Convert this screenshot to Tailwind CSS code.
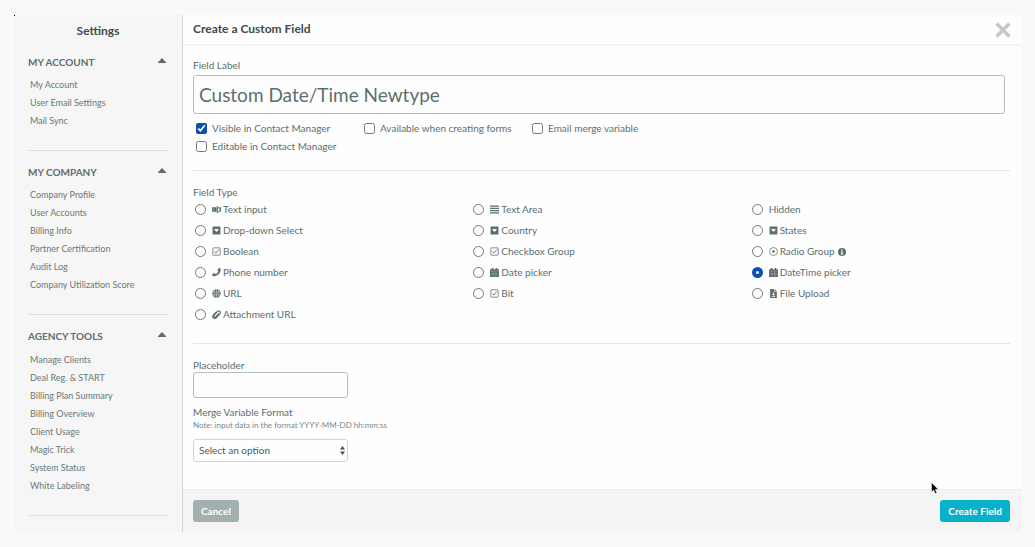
<!DOCTYPE html>
<html lang="en">
<head>
  <meta charset="UTF-8">
  <meta name="viewport" content="width=device-width, initial-scale=1.0">
  <title>Create a Custom Field</title>
  <script src="https://cdn.jsdelivr.net/npm/@tailwindcss/browser@4"></script>
</head>
<body class="bg-[#f9f9f9] font-['Lato',sans-serif] text-[10px] text-[#5c6e6d]">

  <!-- Icons -->
  <svg class="hidden" fill="currentColor">
    <symbol id="i-text" viewBox="0 0 16 16"><path d="M1 4h7v8H1a1 1 0 0 1-1-1V5a1 1 0 0 1 1-1zm1.500 2.500v3h1v-3zM8 2h3v1.200h-.6v9.600h.6V14H8v-1.200h.6V3.200H8zM11 4h4a1 1 0 0 1 1 1v6a1 1 0 0 1-1 1h-4v-2h2.500V6H11z"/></symbol>
    <symbol id="i-caret" viewBox="0 0 16 16"><path fill-rule="evenodd" d="M2 1h12a1 1 0 0 1 1 1v12a1 1 0 0 1-1 1H2a1 1 0 0 1-1-1V2a1 1 0 0 1 1-1zm2.500 4.500v1.500l3.500 3.500 3.500-3.500V5.500z"/></symbol>
    <symbol id="i-check" viewBox="0 0 16 16"><rect x="1.500" y="1.500" width="13" height="13" rx="1" fill="none" stroke="currentColor" stroke-width="1.400"/><path d="M4.500 8l2.500 2.800L12 4.500" fill="none" stroke="currentColor" stroke-width="1.600"/></symbol>
    <symbol id="i-phone" viewBox="0 0 16 16"><path d="M12 0l3.500 1C16 9 10 15.500 1.500 14.500L0 11l4.500-2 1.800 2C9 9.500 10.500 8 11.300 6L9.500 4.500z"/></symbol>
    <symbol id="i-globe" viewBox="0 0 16 16"><circle cx="8" cy="8" r="7.500"/><path d="M1 5.500h14M1 10.500h14M8 .5v15M5 1.500c-1.500 4-1.500 9 0 13M11 1.500c1.500 4 1.500 9 0 13" fill="none" stroke="#fefefe" stroke-width=".7"/></symbol>
    <symbol id="i-clip" viewBox="0 0 16 16"><path d="M12.500 6L7 12c-2 2-5-.5-3-3l6-6.500c2.500-2.500 6.500 1 4 4L8 13.500c-4 4-9-1-5.500-5L8 3" fill="none" stroke="currentColor" stroke-width="2"/></symbol>
    <symbol id="i-lines" viewBox="0 0 16 16"><path d="M0 1h16v2H0zM0 5h16v2H0zM0 9h16v2H0zM0 13h16v2H0z"/></symbol>
    <symbol id="i-cal" viewBox="0 0 16 16"><path d="M3 0h3v2h4V0h3v2h2a1 1 0 0 1 1 1v12a1 1 0 0 1-1 1H1a1 1 0 0 1-1-1V3a1 1 0 0 1 1-1h2z"/><path d="M5.500 6v10M10.500 6v10M0 10.800h16M0 5.500h16" stroke="#fefefe" stroke-width=".4"/></symbol>
    <symbol id="i-radio" viewBox="0 0 16 16"><circle cx="8" cy="8" r="7" fill="none" stroke="currentColor" stroke-width="1.300"/><circle cx="8" cy="8" r="2.300"/></symbol>
    <symbol id="i-file" viewBox="0 0 16 16"><path fill-rule="evenodd" d="M3 0h6v5h5v11H3a1 1 0 0 1-1-1V1a1 1 0 0 1 1-1zm7 0l4 4h-4zM7 6v3H5l3 3 3-3H9V6zM5 13v1h6v-1z"/></symbol>
    <symbol id="i-info" viewBox="0 0 16 16"><path fill-rule="evenodd" d="M8 0a8 8 0 1 1 0 16A8 8 0 0 1 8 0zM6.700 2.500v2.500h2.600V2.500zM5.700 6.500V8h1v3.500h-1V13h4.600v-1.500h-1v-5z"/></symbol>
    <symbol id="i-up" viewBox="0 0 8 5"><path d="M4 0l4 4.300V5H0v-.7z"/></symbol>
  </svg>

  <div class="flex min-h-screen px-3.5 py-[15px]">
    <div class="relative flex flex-1 overflow-hidden rounded-br">
      <span class="absolute top-0 left-0 size-px bg-black"></span>

      <!-- Sidebar -->
      <aside class="w-[169px] shrink-0 border-r border-[#d3d6d9] bg-[#f6f6f6] px-3.5 text-[9px] leading-[18px]">
        <h2 class="pt-[7px] text-center text-[12px] font-bold text-[#3d4b4b]">Settings</h2>

        <section class="border-b border-[#dfe2e3] pt-[13px] pb-5">
          <button class="flex w-full items-center justify-between pr-0.5 text-[10px] font-bold">MY ACCOUNT <svg class="mb-1 h-[5px] w-2" fill="currentColor"><use href="#i-up"/></svg></button>
          <ul class="pt-[5px] pl-0.5 text-[#6a7978]">
            <li><a href="#">My Account</a></li>
            <li><a href="#">User Email Settings</a></li>
            <li><a href="#">Mail Sync</a></li>
          </ul>
        </section>

        <section class="border-b border-[#dfe2e3] pt-3 pb-5">
          <button class="flex w-full items-center justify-between pr-0.5 text-[10px] font-bold">MY COMPANY <svg class="mb-1 h-[5px] w-2" fill="currentColor"><use href="#i-up"/></svg></button>
          <ul class="pt-[5px] pl-0.5 text-[#6a7978]">
            <li><a href="#">Company Profile</a></li>
            <li><a href="#">User Accounts</a></li>
            <li><a href="#">Billing Info</a></li>
            <li><a href="#">Partner Certification</a></li>
            <li><a href="#">Audit Log</a></li>
            <li><a href="#">Company Utilization Score</a></li>
          </ul>
        </section>

        <section class="border-b border-[#dfe2e3] pt-3 pb-5">
          <button class="flex w-full items-center justify-between pr-0.5 text-[10px] font-bold">AGENCY TOOLS <svg class="mb-1 h-[5px] w-2" fill="currentColor"><use href="#i-up"/></svg></button>
          <ul class="pt-1.5 pl-0.5 text-[#6a7978]">
            <li><a href="#">Manage Clients</a></li>
            <li><a href="#">Deal Reg. &amp; START</a></li>
            <li><a href="#">Billing Plan Summary</a></li>
            <li><a href="#">Billing Overview</a></li>
            <li><a href="#">Client Usage</a></li>
            <li><a href="#">Magic Trick</a></li>
            <li><a href="#">System Status</a></li>
            <li><a href="#">White Labeling</a></li>
          </ul>
        </section>
      </aside>

      <!-- Custom field form -->
      <form class="flex flex-1 flex-col bg-[#fefefe]">
        <header class="flex h-[31px] items-center justify-between border-b-2 border-[#f4f4f6] pr-2.5 pl-2.5">
          <h1 class="pb-0.5 text-[12px] font-bold text-[#3d4b4b]">Create a Custom Field</h1>
          <button type="button" aria-label="Close" class="text-[#c8c8c8]"><svg class="size-4" viewBox="0 0 16 16" fill="none" stroke="currentColor" stroke-width="3.500"><path d="M1.500 1.500l13 13M14.500 1.500l-13 13"/></svg></button>
        </header>

        <div class="flex-1 pr-[11px] pl-2.5">
          <section class="border-b border-[#e3e6e7] pt-[11px] pb-[15px]">
            <label for="field-label" class="block leading-4">Field Label</label>
            <div class="pt-0.5 pr-[5px]">
              <input id="field-label" type="text" value="Custom Date/Time Newtype" class="block h-[39px] w-full rounded-[3px] border border-[#b4bdc0] px-[5px] text-[19px]">
            </div>
            <div class="grid w-[507px] grid-cols-3 pt-[5px] pl-[3px] leading-[18px]">
              <label class="flex items-center gap-[5px] whitespace-nowrap"><input type="checkbox" checked class="size-[11px] accent-[#0b4fb3]">Visible in Contact Manager</label>
              <label class="flex items-center gap-[5px] whitespace-nowrap"><input type="checkbox" class="size-[11px]">Available when creating forms</label>
              <label class="flex items-center gap-[5px] whitespace-nowrap"><input type="checkbox" class="size-[11px]">Email merge variable</label>
              <label class="flex items-center gap-[5px] whitespace-nowrap"><input type="checkbox" class="size-[11px]">Editable in Contact Manager</label>
            </div>
          </section>

          <fieldset class="border-b border-[#e3e6e7] pt-3.5 pb-[18px]">
            <legend class="contents"><span class="block leading-[14px]">Field Type</span></legend>
            <div class="-mr-5 grid grid-cols-3 pl-0.5 leading-[21px]">
              <label class="flex items-center"><input type="radio" name="type" class="mr-1.5 size-[11px] appearance-none rounded-full border border-[#767676]"><svg class="mr-0.5 size-[9px]" fill="currentColor"><use href="#i-text"/></svg>Text input</label>
              <label class="flex items-center"><input type="radio" name="type" class="mr-1.5 size-[11px] appearance-none rounded-full border border-[#767676]"><svg class="mr-0.5 size-[9px]" fill="currentColor"><use href="#i-lines"/></svg>Text Area</label>
              <label class="flex items-center"><input type="radio" name="type" class="mr-1.5 size-[11px] appearance-none rounded-full border border-[#767676]">Hidden</label>
              <label class="flex items-center"><input type="radio" name="type" class="mr-1.5 size-[11px] appearance-none rounded-full border border-[#767676]"><svg class="mr-0.5 size-[9px]" fill="currentColor"><use href="#i-caret"/></svg>Drop-down Select</label>
              <label class="flex items-center"><input type="radio" name="type" class="mr-1.5 size-[11px] appearance-none rounded-full border border-[#767676]"><svg class="mr-0.5 size-[9px]" fill="currentColor"><use href="#i-caret"/></svg>Country</label>
              <label class="flex items-center"><input type="radio" name="type" class="mr-1.5 size-[11px] appearance-none rounded-full border border-[#767676]"><svg class="mr-0.5 size-[9px]" fill="currentColor"><use href="#i-caret"/></svg>States</label>
              <label class="flex items-center"><input type="radio" name="type" class="mr-1.5 size-[11px] appearance-none rounded-full border border-[#767676]"><svg class="mr-0.5 size-[9px]" fill="currentColor"><use href="#i-check"/></svg>Boolean</label>
              <label class="flex items-center"><input type="radio" name="type" class="mr-1.5 size-[11px] appearance-none rounded-full border border-[#767676]"><svg class="mr-0.5 size-[9px]" fill="currentColor"><use href="#i-check"/></svg>Checkbox Group</label>
              <label class="flex items-center"><input type="radio" name="type" class="mr-1.5 size-[11px] appearance-none rounded-full border border-[#767676]"><svg class="mr-0.5 size-[9px]" fill="currentColor"><use href="#i-radio"/></svg>Radio Group<svg class="ml-[3px] size-2" fill="currentColor"><use href="#i-info"/></svg></label>
              <label class="flex items-center"><input type="radio" name="type" class="mr-1.5 size-[11px] appearance-none rounded-full border border-[#767676]"><svg class="mr-0.5 size-[9px]" fill="currentColor"><use href="#i-phone"/></svg>Phone number</label>
              <label class="flex items-center"><input type="radio" name="type" class="mr-1.5 size-[11px] appearance-none rounded-full border border-[#767676]"><svg class="mr-0.5 size-[9px]" fill="currentColor"><use href="#i-cal"/></svg>Date picker</label>
              <label class="flex items-center"><input type="radio" name="type" checked class="mr-1.5 size-[11px] appearance-none rounded-full border-4 border-[#0b4fb3]"><svg class="mr-0.5 size-[9px]" fill="currentColor"><use href="#i-cal"/></svg>DateTime picker</label>
              <label class="flex items-center"><input type="radio" name="type" class="mr-1.5 size-[11px] appearance-none rounded-full border border-[#767676]"><svg class="mr-0.5 size-[9px]" fill="currentColor"><use href="#i-globe"/></svg>URL</label>
              <label class="flex items-center"><input type="radio" name="type" class="mr-1.5 size-[11px] appearance-none rounded-full border border-[#767676]"><svg class="mr-0.5 size-[9px]" fill="currentColor"><use href="#i-check"/></svg>Bit</label>
              <label class="flex items-center"><input type="radio" name="type" class="mr-1.5 size-[11px] appearance-none rounded-full border border-[#767676]"><svg class="mr-0.5 size-[9px]" fill="currentColor"><use href="#i-file"/></svg>File Upload</label>
              <label class="flex items-center"><input type="radio" name="type" class="mr-1.5 size-[11px] appearance-none rounded-full border border-[#767676]"><svg class="mr-0.5 size-[9px]" fill="currentColor"><use href="#i-clip"/></svg>Attachment URL</label>
            </div>
          </fieldset>

          <section class="pt-3.5 pb-4">
            <label for="placeholder" class="block leading-[14px]">Placeholder</label>
            <input id="placeholder" type="text" class="block h-[26px] w-[155px] rounded-[3px] border border-[#b4bdc0] px-[5px]">
            <label for="merge-format" class="block pt-[7px] leading-[14px]">Merge Variable Format</label>
            <p class="text-[8px] leading-3 text-[#7a8988]">Note: input data in the format YYYY-MM-DD hh:mm:ss</p>
            <div class="relative mt-2 w-[155px]">
              <select id="merge-format" class="block h-[23px] w-full appearance-none rounded-[3px] border border-[#d0d3d8] pl-[5px] text-[#4b5c5b]">
                <option>Select an option</option>
              </select>
              <svg class="pointer-events-none absolute top-[7px] right-[3px] h-[9px] w-[5px]" viewBox="0 0 5 9" fill="#3f504f"><path d="M2.500 0L5 3.600H0zM2.500 9L0 5.400h5z"/></svg>
            </div>
          </section>
        </div>

        <footer class="relative flex items-center justify-between border-t border-[#ececef] bg-[#f4f4f5] py-2.5 pr-[11px] pl-2.5 font-bold text-white">
          <button type="button" class="h-[22px] rounded-[3px] bg-[#a2afae] px-2">Cancel</button>
          <button class="h-[22px] rounded-[3px] bg-[#06b1c9] px-2">Create Field</button>
          <svg class="absolute -top-2 right-[82px] h-3 w-2" viewBox="0 0 8 12" stroke="#fff" stroke-width=".5"><path d="M.5 .5v9.500l2.200-2 1.500 3.500 1.600-.8-1.500-3.200h3z"/></svg>
        </footer>
      </form>
    </div>
  </div>

</body>
</html>
